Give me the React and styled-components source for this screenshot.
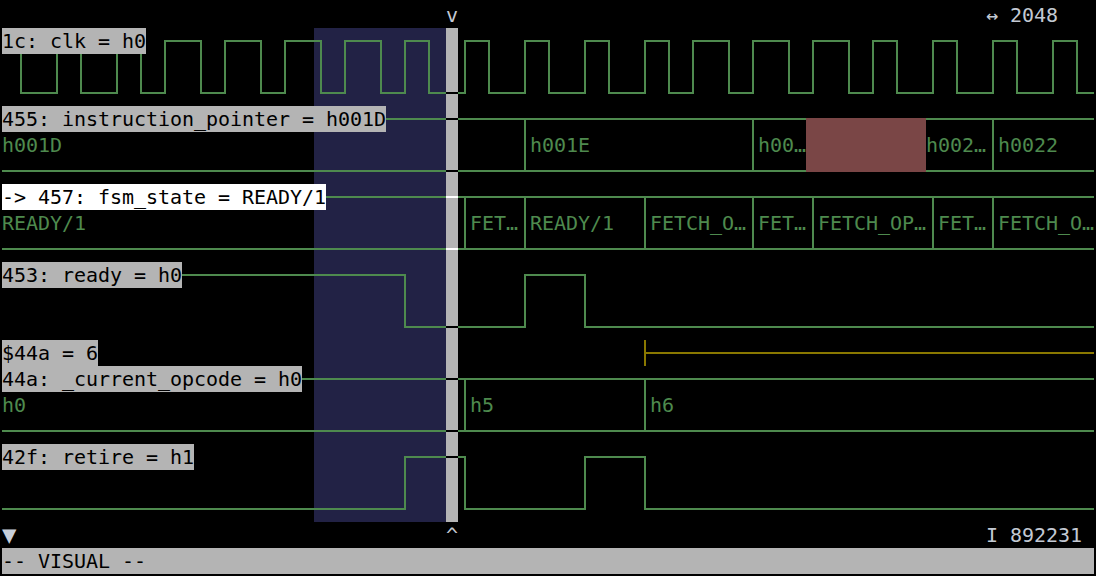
import React from 'react';
import styled, { createGlobalStyle } from 'styled-components';

const CW = 12;
const RH = 26;
const WIDTH = 1092;
const GREEN = '#4e8a4e';
const CURSOR_COL = 37;

const Global = createGlobalStyle`
  html, body { margin: 0; padding: 0; background: #000; }
  #root { width: 1096px; height: 576px; }
`;

const Screen = styled.div`
  width: 1096px;
  height: 576px;
  box-sizing: border-box;
  padding: 2px;
  background: #000;
  font-family: "DejaVu Sans Mono", "Liberation Mono", monospace;
  font-size: 20px;
  letter-spacing: -0.04px;
  line-height: 26px;
  display: flex;
  flex-direction: column;
  overflow: hidden;
`;

const GridLine = styled.div`
  display: grid;
  grid-template-columns: repeat(91, ${CW}px);
  height: ${RH}px;
  color: #c3c9d3;
`;

const Cell = styled.span`
  grid-column: ${(p) => p.$col + 1} / span ${(p) => p.$span || 1};
  white-space: pre;
  color: ${(p) => p.$color || 'inherit'};
`;

const Marker = styled(Cell)`
  font-size: 24px;
  line-height: 26px;
  color: #c8d0dc;
`;

const Viewport = styled.div`
  position: relative;
  height: ${19 * RH}px;
`;

const Selection = styled.div`
  position: absolute;
  top: 0;
  bottom: 0;
  left: ${26 * CW}px;
  width: ${11 * CW}px;
  background: #222245;
`;

const Cursor = styled.div`
  position: absolute;
  top: 0;
  bottom: 0;
  left: ${CURSOR_COL * CW}px;
  width: ${CW}px;
  background: #b4b4b4;
`;

const SignalBlock = styled.div`
  position: relative;
  height: ${(p) => p.$rows * RH}px;
`;

const Wave = styled.svg`
  display: block;
  overflow: visible;
`;

const Label = styled.span`
  position: absolute;
  top: 0;
  left: 0;
  height: ${RH}px;
  background: ${(p) => (p.$active ? '#ffffff' : '#b4b4b4')};
  color: #000;
  white-space: pre;
`;

const ValueText = styled.text`
  font-family: "DejaVu Sans Mono", "Liberation Mono", monospace;
  font-size: 20px;
  letter-spacing: -0.04px;
  fill: ${GREEN};
`;

const StatusBar = styled.div`
  height: ${RH}px;
  background: #b4b4b4;
  color: #000;
  white-space: pre;
`;

const cx = (c) => c * CW + 7;

function DigitalWave({ transitions, startHigh, rows = 3 }) {
  const hi = 13;
  const lo = 13 + (rows - 1) * RH;
  let level = startHigh;
  let d = `M0 ${level ? hi : lo}`;
  let cursorLevel = null;
  for (const c of transitions) {
    if (cursorLevel === null && c > CURSOR_COL) cursorLevel = level;
    d += ` H${cx(c)}`;
    level = !level;
    d += ` V${level ? hi : lo}`;
  }
  if (cursorLevel === null) cursorLevel = level;
  d += ` H${WIDTH}`;
  const cy = cursorLevel ? hi : lo;
  return (
    <Wave width={WIDTH} height={rows * RH} shapeRendering="crispEdges">
      <path d={d} stroke={GREEN} strokeWidth="2" fill="none" />
      <line x1={CURSOR_COL * CW} x2={CURSOR_COL * CW + CW} y1={cy} y2={cy} stroke="#000" strokeWidth="2" />
    </Wave>
  );
}

function BusWave({ transitions, values, hidden, active }) {
  const top = 13;
  const bot = 13 + 2 * RH;
  const cursorColor = active ? '#ffffff' : '#000000';
  return (
    <Wave width={WIDTH} height={3 * RH} shapeRendering="crispEdges">
      <path d={`M0 ${top} H${WIDTH} M0 ${bot} H${WIDTH}`} stroke={GREEN} strokeWidth="2" fill="none" />
      {transitions.map((c) => (
        <line key={c} x1={cx(c)} x2={cx(c)} y1={top} y2={bot} stroke={GREEN} strokeWidth="2" />
      ))}
      {hidden && (
        <rect x={hidden[0] * CW} width={(hidden[1] - hidden[0]) * CW} y={top - 1} height={bot - top + 2} fill="#7a4646" />
      )}
      {values.map(([c, t]) => (
        <ValueText key={c} x={c * CW} y={RH + 20}>{t}</ValueText>
      ))}
      <line x1={CURSOR_COL * CW} x2={CURSOR_COL * CW + CW} y1={top} y2={top} stroke={cursorColor} strokeWidth="2" />
      <line x1={CURSOR_COL * CW} x2={CURSOR_COL * CW + CW} y1={bot} y2={bot} stroke={cursorColor} strokeWidth="2" />
    </Wave>
  );
}

function MarkerWave({ col }) {
  return (
    <Wave width={WIDTH} height={RH} shapeRendering="crispEdges">
      <line x1={cx(col)} x2={cx(col)} y1={0} y2={RH} stroke="#8a7800" strokeWidth="2" />
      <line x1={cx(col)} x2={WIDTH} y1={13} y2={13} stroke="#8a7800" strokeWidth="2" />
    </Wave>
  );
}

const clkTransitions = [
  1, 4, 6, 9, 11, 13, 16, 18, 21, 23, 26, 28, 31, 33, 35, 38, 40, 43, 45, 48, 50, 53, 55, 57,
  60, 62, 65, 67, 70, 72, 74, 77, 79, 82, 84, 87, 89,
];

export default function App() {
  return (
    <>
      <Global />
      <Screen>
        <GridLine>
          <Cell $col={37}>v</Cell>
          <Cell $col={82} $span={6}>↔ 2048</Cell>
        </GridLine>

        <Viewport>
          <Selection />
          <Cursor />

          <SignalBlock $rows={3}>
            <DigitalWave transitions={clkTransitions} startHigh rows={3} />
            <Label>1c: clk = h0</Label>
          </SignalBlock>

          <SignalBlock $rows={3}>
            <BusWave
              transitions={[43, 62, 82]}
              hidden={[67, 77]}
              values={[
                [0, 'h001D'],
                [44, 'h001E'],
                [63, 'h00…'],
                [77, 'h002…'],
                [83, 'h0022'],
              ]}
            />
            <Label>455: instruction_pointer = h001D</Label>
          </SignalBlock>

          <SignalBlock $rows={3}>
            <BusWave
              active
              transitions={[38, 43, 53, 62, 67, 77, 82]}
              values={[
                [0, 'READY/1'],
                [39, 'FET…'],
                [44, 'READY/1'],
                [54, 'FETCH_O…'],
                [63, 'FET…'],
                [68, 'FETCH_OP…'],
                [78, 'FET…'],
                [83, 'FETCH_O…'],
              ]}
            />
            <Label $active>-&gt; 457: fsm_state = READY/1</Label>
          </SignalBlock>

          <SignalBlock $rows={3}>
            <DigitalWave transitions={[33, 43, 48]} startHigh rows={3} />
            <Label>453: ready = h0</Label>
          </SignalBlock>

          <SignalBlock $rows={1}>
            <MarkerWave col={53} />
            <Label>$44a = 6</Label>
          </SignalBlock>

          <SignalBlock $rows={3}>
            <BusWave
              transitions={[38, 53]}
              values={[
                [0, 'h0'],
                [39, 'h5'],
                [54, 'h6'],
              ]}
            />
            <Label>44a: _current_opcode = h0</Label>
          </SignalBlock>

          <SignalBlock $rows={3}>
            <DigitalWave transitions={[33, 38, 48, 53]} startHigh={false} rows={3} />
            <Label>42f: retire = h1</Label>
          </SignalBlock>
        </Viewport>

        <GridLine>
          <Marker $col={0}>▼</Marker>
          <Cell $col={37}>^</Cell>
          <Cell $col={82} $span={8}>I 892231</Cell>
        </GridLine>

        <StatusBar>-- VISUAL --</StatusBar>
      </Screen>
    </>
  );
}
